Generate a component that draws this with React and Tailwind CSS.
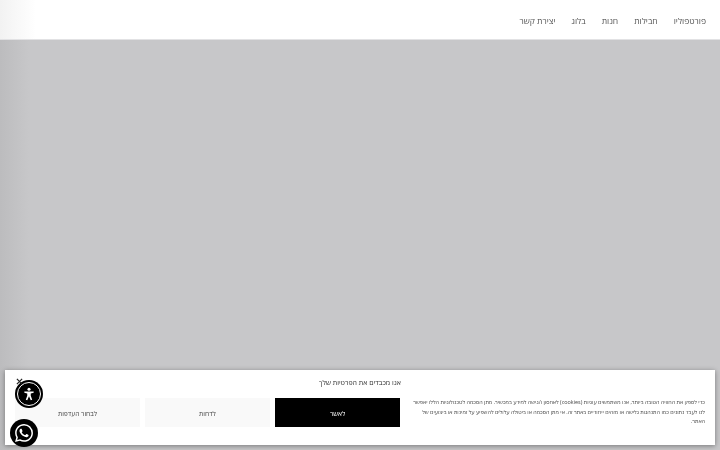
import React from 'react';

const navItems = ['פורטפוליו', 'חבילות', 'חנות', 'בלוג', 'יצירת קשר'];

const App = () => {
  return (
    <div dir="rtl" className="relative w-[720px] h-[450px] overflow-hidden flex flex-col bg-[#c7c7c9] font-['Open_Sans','Liberation_Sans',sans-serif] [will-change:transform]">
      {/* Header */}
      <header className="h-[40px] shrink-0 bg-gradient-to-l from-white from-[95%] to-[#f2f2f2] border-b border-[#e2e2e4] flex items-center pr-[14px] pt-[3px]">
        <nav className="flex items-center gap-[16px] text-[8.5px] text-[#555]">
          {navItems.map((item) => (
            <a key={item} href="#">{item}</a>
          ))}
        </nav>
      </header>

      {/* Empty hero with soft shadow on the left */}
      <main className="flex-1 bg-gradient-to-l from-[#c7c7c9] from-[96%] to-[#bcbcbe]" />

      {/* Cookie banner */}
      <div className="absolute left-[5px] top-[370px] w-[710px] h-[75px] bg-white shadow-[0_1px_5px_rgba(0,0,0,0.4)] flex flex-col">
        <p className="text-center text-[7px] text-[#333] pt-[8px] h-[28px]">אנו מכבדים את הפרטיות שלך</p>
        <div className="flex gap-[5px] pr-[10px]">
          <p className="w-[295px] shrink-0 ml-[5px] text-[5.45px] leading-[9.5px] text-[#444]">
            כדי לספק את החוויה הטובה ביותר, אנו משתמשים עוגיות (cookies) לאחסון ו/גישה למידע במכשיר. מתן הסכמה לטכנולוגיות הללו יאפשר לנו לעבד נתונים כמו התנהגות גלישה או מזהים ייחודיים באתר זה. אי מתן הסכמה או ביטולה עלולים להשפיע על זמינות או ביצועים של האתר.
          </p>
          <button className="w-[125px] h-[29px] pt-[3px] bg-black text-white text-[6.7px]">לאשר</button>
          <button className="w-[125px] h-[29px] pt-[3px] bg-[#f9f9f9] text-[#444] text-[6.7px]">לדחות</button>
          <button className="w-[125px] h-[29px] pt-[3px] bg-[#f9f9f9] text-[#444] text-[6.7px]">לבחור העדפות</button>
        </div>
      </div>

      {/* Accessibility button */}
      <button className="absolute left-[15px] top-[380px] w-[28px] h-[28px] rounded-full bg-black flex items-center justify-center">
        <span className="w-[24px] h-[24px] rounded-full border border-white flex items-center justify-center">
          <svg viewBox="0 0 24 24" className="w-[14px] h-[14px]" fill="white">
            <circle cx="12" cy="4" r="2.6" />
            <path d="M4 7.5 L20 7.5 L20 10 L15 11 L15 15 L17.5 22 L15 22.5 L12 16 L9 22.5 L6.5 22 L9 15 L9 11 L4 10 Z" />
          </svg>
        </span>
      </button>
      <svg viewBox="0 0 8 8" className="absolute left-[16px] top-[378px] w-[7px] h-[7px]" stroke="#222" strokeWidth="1.4">
        <path d="M1 1 L7 7 M7 1 L1 7" />
      </svg>

      {/* WhatsApp button */}
      <button className="absolute left-[10px] top-[419px] w-[28px] h-[28px] rounded-full bg-black flex items-center justify-center">
        <svg viewBox="0 0 24 24" className="w-[18px] h-[18px]" fill="white">
          <path d="M17.47 14.38c-.3-.15-1.76-.87-2.03-.97-.27-.1-.47-.15-.67.15-.2.3-.77.97-.94 1.16-.17.2-.35.22-.64.08-.3-.15-1.26-.46-2.39-1.48-.88-.79-1.48-1.76-1.65-2.06-.17-.3-.02-.46.13-.6.13-.14.3-.35.45-.52.15-.17.2-.3.3-.5.1-.2.05-.37-.03-.52-.07-.15-.67-1.61-.92-2.2-.24-.58-.49-.5-.67-.51h-.57c-.2 0-.52.07-.79.37-.27.3-1.04 1.02-1.04 2.48s1.06 2.88 1.21 3.07c.15.2 2.1 3.2 5.08 4.49.71.3 1.26.49 1.69.62.71.23 1.36.2 1.87.12.57-.09 1.76-.72 2.01-1.42.25-.7.25-1.3.17-1.42-.07-.13-.27-.2-.57-.35zM12.05 21.8h-.01a9.87 9.87 0 0 1-5.03-1.38l-.36-.21-3.74.98 1-3.65-.24-.37a9.86 9.86 0 0 1-1.51-5.26c0-5.45 4.44-9.88 9.89-9.88 2.64 0 5.12 1.03 6.99 2.9a9.82 9.82 0 0 1 2.89 6.99c0 5.45-4.44 9.88-9.88 9.88zM20.46 3.49A11.82 11.82 0 0 0 12.05 0C5.5 0 .16 5.34.16 11.89c0 2.1.55 4.14 1.59 5.95L.06 24l6.3-1.65a11.88 11.88 0 0 0 5.68 1.45h.01c6.55 0 11.89-5.34 11.89-11.89a11.82 11.82 0 0 0-3.48-8.41z" />
        </svg>
      </button>
    </div>
  );
};

export default App;
